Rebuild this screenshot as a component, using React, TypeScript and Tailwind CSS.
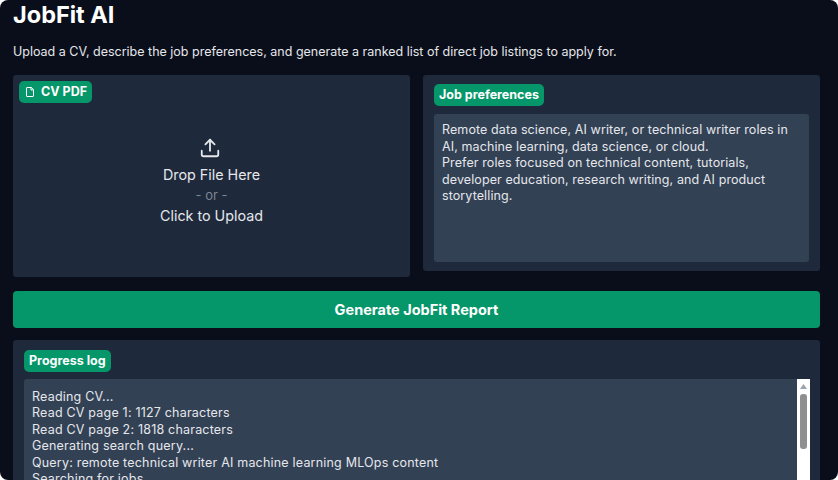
import React from 'react';

const logLines = [
  'Reading CV...',
  'Read CV page 1: 1127 characters',
  'Read CV page 2: 1818 characters',
  'Generating search query...',
  'Query: remote technical writer AI machine learning MLOps content',
  'Searching for jobs...',
];

const prefLines = [
  'Remote data science, AI writer, or technical writer roles in',
  'AI, machine learning, data science, or cloud.',
  'Prefer roles focused on technical content, tutorials,',
  'developer education, research writing, and AI product',
  'storytelling.',
];

const Badge = ({ children }: { children: React.ReactNode }) => (
  <div className="flex h-[22px] w-fit items-center gap-[5px] rounded-[5px] bg-[#059669] px-[5px] text-[12.5px] font-bold text-white">
    {children}
  </div>
);

export default function App() {
  return (
    <div className="h-[480px] w-[838px] overflow-hidden bg-white font-['Inter',sans-serif]">
      <div className="h-full overflow-hidden rounded-[8px] bg-[#0a0e1a] pl-[13px] pr-[18px]">
        <h1 className="h-[41px] pt-[2px] text-[23.5px] leading-[26px] font-bold text-white">JobFit AI</h1>
        <p className="h-[34px] pt-[2px] text-[12.5px] leading-[18px] text-[#e5e7eb]">
          Upload a CV, describe the job preferences, and generate a ranked list of direct job listings to apply for.
        </p>

        <div className="flex items-start gap-[13px]">
          <div className="flex h-[202px] w-[397px] flex-col rounded-[3px] bg-[#1e293b] pt-[6px] pl-[6px]">
            <Badge>
              <svg width="12" height="12" viewBox="0 0 24 24" fill="none" stroke="currentColor" strokeWidth="2" strokeLinecap="round" strokeLinejoin="round">
                <path d="M14 3H6a1 1 0 0 0-1 1v16a1 1 0 0 0 1 1h12a1 1 0 0 0 1-1V8z" />
                <path d="M14 3v5h5" />
              </svg>
              CV PDF
            </Badge>
            <div className="flex flex-col items-center pt-[34px] pr-[6px] text-[#e5e7eb]">
              <svg width="22" height="22" viewBox="0 0 24 24" fill="none" stroke="currentColor" strokeWidth="2" strokeLinecap="round" strokeLinejoin="round" className="-ml-[3px]">
                <path d="M21 15v4a2 2 0 0 1-2 2H5a2 2 0 0 1-2-2v-4" />
                <path d="M17 8l-5-5-5 5" />
                <path d="M12 3v12" />
              </svg>
              <div className="mt-[6px] text-[14.3px] leading-[20px]">Drop File Here</div>
              <div className="text-[13px] leading-[21px] text-[#7c8594]">- or -</div>
              <div className="text-[14.3px] leading-[20px]">Click to Upload</div>
            </div>
          </div>

          <div className="h-[196px] w-[397px] rounded-[3px] bg-[#1e293b] px-[11px] pt-[9px]">
            <Badge>Job preferences</Badge>
            <div className="mt-[8px] h-[148px] rounded-[3px] bg-[#334155] px-[8px] pt-[8px] text-[12.5px] leading-[16.5px] tracking-[0.1px] whitespace-nowrap text-[#e5e7eb]">
              {prefLines.map((line) => (
                <div key={line}>{line}</div>
              ))}
            </div>
          </div>
        </div>

        <button className="mt-[14px] block h-[37px] w-[807px] rounded-[4px] bg-[#059669] text-[14.5px] font-bold text-white">
          Generate JobFit Report
        </button>

        <div className="mt-[12px] h-[160px] w-[807px] rounded-[3px] bg-[#1e293b] px-[11px] pt-[10px]">
          <Badge>Progress log</Badge>
          <div className="mt-[7px] flex h-[120px] w-[786px] rounded-[3px] bg-[#334155]">
            <div className="flex-1 px-[8px] pt-[10px] text-[12.5px] leading-[16.4px] tracking-[0.2px] text-[#e5e7eb]">
              {logLines.map((line) => (
                <div key={line}>{line}</div>
              ))}
            </div>
            <div className="flex h-full w-[13px] flex-col items-center bg-white pt-[5px]">
              <svg width="7" height="5" viewBox="0 0 7 5" fill="#9ca3af">
                <path d="M3.5 0L7 5H0z" />
              </svg>
              <div className="mt-[5px] h-[55px] w-[7px] rounded-[3px] bg-[#8f8f8f]"></div>
            </div>
          </div>
        </div>
      </div>
    </div>
  );
}
